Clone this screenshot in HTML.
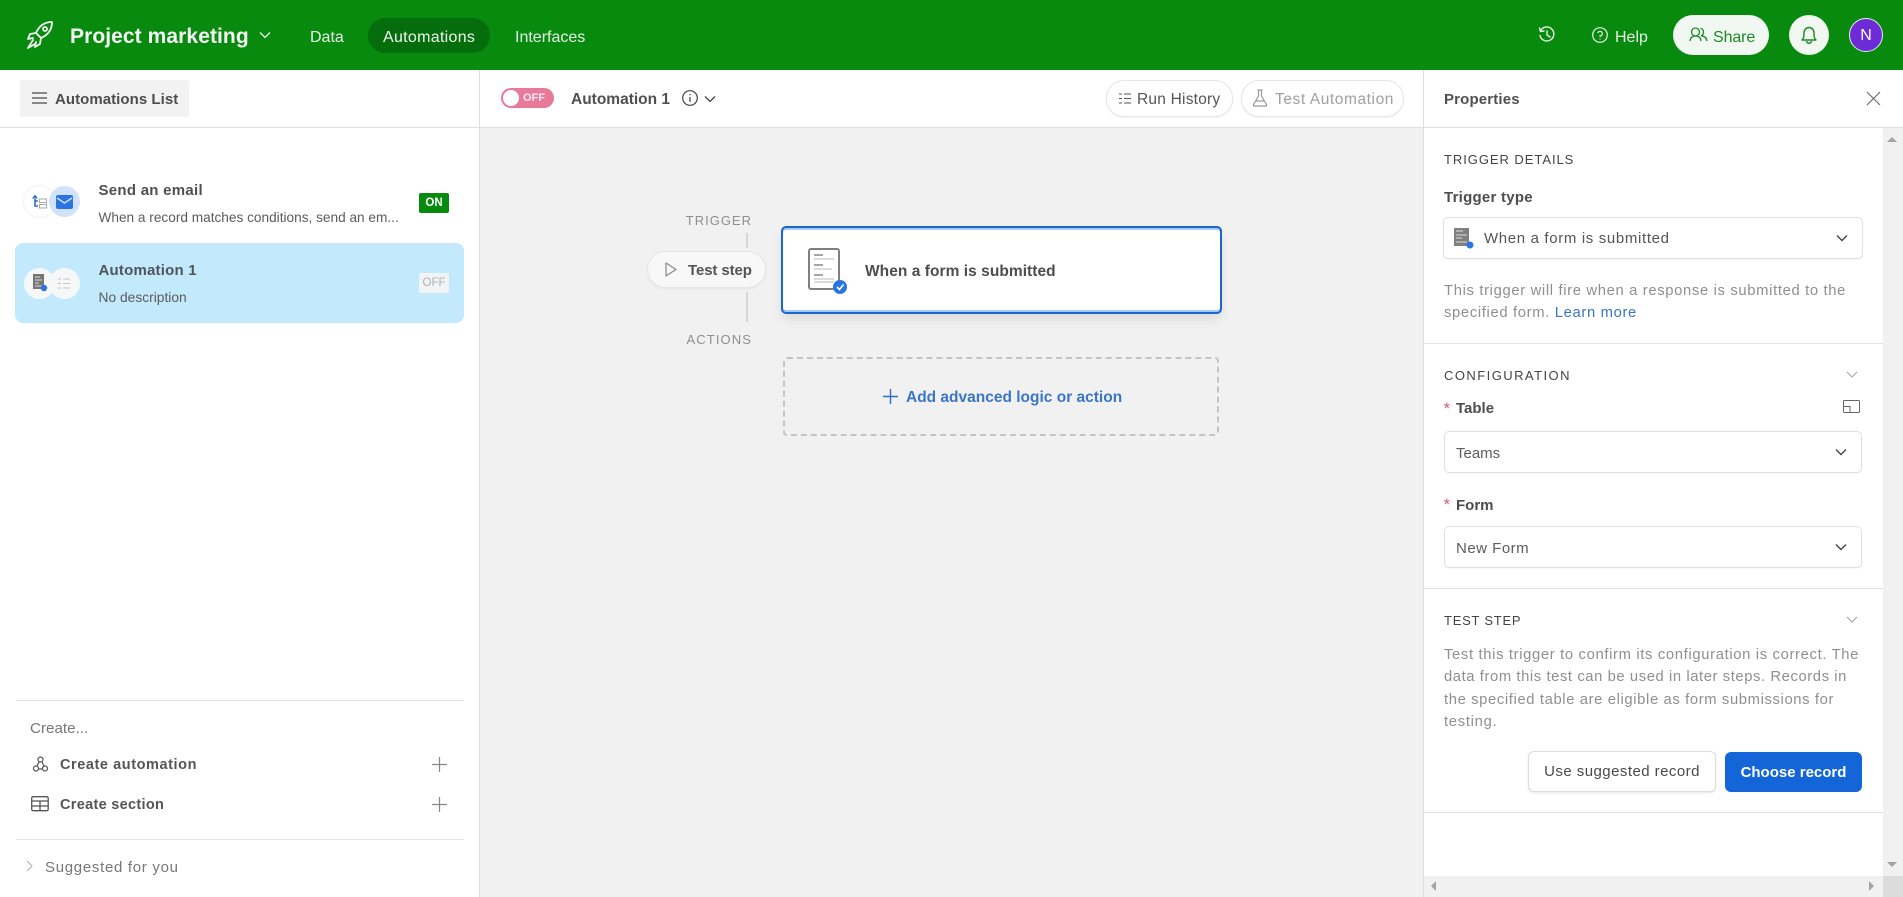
<!DOCTYPE html>
<html><head><meta charset="utf-8"><style>
html,body{margin:0;padding:0;width:1903px;height:897px;overflow:hidden;background:#fff;font-family:"Liberation Sans",sans-serif}
.a{position:absolute}
.t{position:absolute;white-space:nowrap;line-height:20px;height:20px;font-size:15px;color:#4a4a4a;margin-top:1px}
svg{position:absolute;overflow:visible}
.l{position:absolute;height:1px;background:#e4e4e4}
.sel{position:absolute;background:#fff;border:1px solid #e0e0e0;border-radius:5px;box-sizing:border-box;box-shadow:0 1px 1px rgba(0,0,0,.04)}
.g{color:#8f8f8f}.h{font-size:13px;color:#444}
.b{font-weight:bold}
</style></head><body>
<!-- canvas -->
<div class="a" style="left:480px;top:127px;width:943px;height:770px;background:#f1f1f1"></div>
<!-- header -->
<div class="a" style="left:0;top:0;width:1903px;height:70px;background:#078a0e"></div>
<svg style="left:26px;top:20px" width="28" height="30" viewBox="0 0 28 30" fill="none" stroke="#f3f8f3" stroke-width="1.800" stroke-linejoin="round" stroke-linecap="round"><path d="M26 2 C18 2 13 6 10 13 L15 18 C22 15 26 10 26 2Z"/><circle cx="19" cy="9" r="2"/><path d="M10 13 L4 14 L2 19 L7 18M15 18 L14 24 L9 27 L10 22"/><path d="M7 20 L2 28 L9 24"/></svg>
<div class="t" style="left:70px;top:26px;font-size:21px;font-weight:bold;color:#f4f9f4;letter-spacing:.08px">Project marketing</div>
<svg style="left:259px;top:31px" width="12" height="8" fill="none" stroke="#e6f2e6" stroke-width="1.300"><path d="M1 1.500 L6 6.500 L11 1.500"/></svg>
<div class="t" style="left:310px;top:27px;font-size:16px;color:#e6f2e6">Data</div>
<div class="a" style="left:368px;top:18px;width:122px;height:35px;border-radius:18px;background:#056d0b"></div>
<div class="t" style="left:383px;top:27px;font-size:16px;color:#eef7ee;letter-spacing:.3px">Automations</div>
<div class="t" style="left:515px;top:27px;font-size:16px;color:#e6f2e6">Interfaces</div>
<svg style="left:1538px;top:26px" width="18" height="18" viewBox="0 0 18 18" fill="none" stroke="#e6f2e6" stroke-width="1.400" stroke-linecap="round"><path d="M2.500 5 A7 7 0 1 1 2 9.500"/><path d="M1.500 2 L2.500 5.500 L6 5"/><path d="M9 5 V9 L12 11"/></svg>
<svg style="left:1592px;top:27px" width="16" height="16" viewBox="0 0 16 16" fill="none" stroke="#e6f2e6" stroke-width="1.200"><circle cx="8" cy="8" r="7.300"/><path d="M5.800 6 A2.300 2.300 0 1 1 8 9 V10"/><path d="M8 11.500 V12.500"/></svg>
<div class="t" style="left:1615px;top:27px;font-size:16px;color:#e6f2e6">Help</div>
<div class="a" style="left:1673px;top:15px;width:96px;height:40px;border-radius:20px;background:#f1f7f1"></div>
<svg style="left:1689px;top:27px" width="19" height="15" viewBox="0 0 19 15" fill="none" stroke="#1c8a24" stroke-width="1.300"><circle cx="6.500" cy="5" r="4"/><path d="M1 14 C1.500 10 4 9 6.500 9 C9 9 11.500 10 12 14"/><path d="M11.500 1.200 A4 4 0 0 1 12 8.800 C15 9 17.500 10.500 18 14"/></svg>
<div class="t" style="left:1713px;top:27px;font-size:16px;color:#1c8a24;letter-spacing:-.1px">Share</div>
<div class="a" style="left:1789px;top:15px;width:40px;height:40px;border-radius:50%;background:#f1f7f1"></div>
<svg style="left:1801px;top:26px" width="16" height="19" viewBox="0 0 16 19" fill="none" stroke="#1c8a24" stroke-width="1.400" stroke-linejoin="round"><path d="M1 14 C3 12 3 10 3 7 C3 4 5 1.500 8 1.500 C11 1.500 13 4 13 7 C13 10 13 12 15 14Z"/><path d="M5.500 15 C6 18 10 18 10.500 15"/></svg>
<div class="a" style="left:1849px;top:18px;width:32px;height:32px;border-radius:50%;background:#6d2bd6;border:1px solid #e8e8f5;color:#fff;font-size:16px;text-align:center;line-height:34px">N</div>
<!-- left panel -->
<div class="a" style="left:479px;top:70px;width:1px;height:827px;background:#dedede"></div>
<div class="l" style="left:0;top:127px;width:1903px;background:#dedede"></div>
<div class="a" style="left:20px;top:80px;width:169px;height:37px;background:#f2f2f2;border-radius:2px"></div>
<svg style="left:32px;top:92px" width="15" height="12" stroke="#666" stroke-width="1.400"><path d="M0 1H15M0 6H15M0 11H15"/></svg>
<div class="t" style="left:55px;top:89px;font-weight:bold;font-size:15px;color:#4d4d4d;letter-spacing:.05px">Automations List</div>
<!-- item 1 -->
<div class="a" style="left:24px;top:186px;width:31px;height:31px;border-radius:50%;background:#fff;box-shadow:0 0 2px rgba(0,0,0,.15)"></div>
<svg style="left:32px;top:194px" width="15" height="16" fill="none"><path d="M3 5 V12 H6M3 7 H6" stroke="#2f6fd8" stroke-width="1.600"/><path d="M3 .5 L6 4.500 H0Z" fill="#2f6fd8"/><rect x="7.500" y="5" width="7" height="3.500" stroke="#aaa"/><rect x="7.500" y="10.500" width="7" height="3.500" stroke="#aaa"/></svg>
<div class="a" style="left:48.500px;top:186px;width:31px;height:31px;border-radius:50%;background:#d2e2fb"></div>
<svg style="left:56px;top:195px" width="17" height="14"><rect width="17" height="14" rx="2" fill="#2b74e4"/><path d="M1 3 L8.500 8 L16 3" fill="none" stroke="#d2e2fb" stroke-width="1.500"/></svg>
<div class="t" style="left:98.500px;top:180px;font-size:15px;font-weight:bold;color:#505050;letter-spacing:.27px">Send an email</div>
<div class="t" style="left:98.500px;top:207px;font-size:13.650px;color:#5c5c5c">When a record matches conditions, send an em...</div>
<div class="a" style="left:419px;top:193px;width:30px;height:20px;background:#078a0e;border-radius:2px;color:#fff;font:bold 11.500px/20px 'Liberation Sans',sans-serif;text-align:center">ON</div>
<!-- item 2 -->
<div class="a" style="left:15px;top:243px;width:449px;height:80px;background:#c2e9fc;border-radius:8px"></div>
<div class="a" style="left:24px;top:267.500px;width:31px;height:31px;border-radius:50%;background:#f6f8f8"></div>
<div class="a" style="left:48.500px;top:267.500px;width:31px;height:31px;border-radius:50%;background:#f6f8f8"></div>
<svg style="left:33px;top:274px" width="14" height="20"><rect x="0" y="0" width="11" height="15" fill="#757575"/><path d="M2 3H7M2 6H9M2 9H6M2 12H9" stroke="#ddd" stroke-width="1"/><circle cx="11" cy="14" r="3.200" fill="#2b74e4"/></svg>
<svg style="left:58px;top:277px" width="12" height="14" stroke="#c4c4c4" fill="none"><path d="M0 2H3M0 6.500H3M0 11H3M5 2H12M5 6.500H12M5 11H12"/></svg>
<div class="t" style="left:98.500px;top:260px;font-size:15px;font-weight:bold;color:#4f555b;letter-spacing:.2px">Automation 1</div>
<div class="t" style="left:98.500px;top:287px;font-size:13.800px;color:#5c5c5c">No description</div>
<div class="a" style="left:419px;top:273px;width:30px;height:20px;background:#f0f4f6;border-radius:2px;color:#b0b0b0;font:11.500px/20px 'Liberation Sans',sans-serif;text-align:center">OFF</div>
<!-- bottom left -->
<div class="l" style="left:16px;top:700px;width:448px"></div>
<div class="t" style="left:30px;top:718px;font-size:15.200px;color:#777">Create...</div>
<svg style="left:33px;top:756px" width="15" height="16" fill="none" stroke="#555" stroke-width="1.200"><circle cx="7.500" cy="3.500" r="2.500"/><circle cx="3" cy="12.500" r="2.500"/><circle cx="12" cy="12.500" r="2.500"/><path d="M6 6 L4 10M9 6 L11 10M5.500 13H9.500"/></svg>
<div class="t" style="left:60px;top:754px;font-weight:bold;font-size:14.500px;color:#555;letter-spacing:.57px">Create automation</div>
<svg style="left:432px;top:757px" width="15" height="15" stroke="#888" stroke-width="1.200"><path d="M7.500 0V15M0 7.500H15"/></svg>
<svg style="left:31px;top:796px" width="18" height="16" fill="none" stroke="#555" stroke-width="1.300"><rect x=".7" y=".7" width="16.500" height="14" rx="1.500"/><path d="M.7 5H17M.7 10H17M9 5V15"/></svg>
<div class="t" style="left:60px;top:794px;font-weight:bold;font-size:14.500px;color:#555;letter-spacing:.3px">Create section</div>
<svg style="left:432px;top:797px" width="15" height="15" stroke="#888" stroke-width="1.200"><path d="M7.500 0V15M0 7.500H15"/></svg>
<div class="l" style="left:16px;top:839px;width:448px"></div>
<svg style="left:26px;top:860px" width="7" height="12" fill="none" stroke="#b0b0b0" stroke-width="1.100"><path d="M1 1 L6 6 L1 11"/></svg>
<div class="t" style="left:45px;top:857px;font-size:15px;color:#777;letter-spacing:.7px">Suggested for you</div>
<!-- toolbar -->
<div class="a" style="left:501px;top:88px;width:53px;height:20px;border-radius:10px;background:#e8799b"></div>
<div class="a" style="left:503px;top:90px;width:16px;height:16px;border-radius:50%;background:#fff"></div>
<div class="t" style="left:523px;top:87px;font-size:11px;font-weight:bold;color:#fff;opacity:.85">OFF</div>
<div class="t" style="left:571px;top:89px;font-size:15.500px;font-weight:bold;color:#505050;letter-spacing:0">Automation 1</div>
<svg style="left:682px;top:90px" width="16" height="16" fill="none" stroke="#444" stroke-width="1.200"><circle cx="8" cy="8" r="7.300"/><path d="M8 7V12M8 4V5.200"/></svg>
<svg style="left:704px;top:95px" width="12" height="8" fill="none" stroke="#444" stroke-width="1.300"><path d="M1 1.500 L6 6.500 L11 1.500"/></svg>
<div class="a" style="left:1106px;top:80px;width:127px;height:37px;border-radius:18px;background:#fff;border:1px solid #e6e6e6;box-sizing:border-box;box-shadow:0 1px 2px rgba(0,0,0,.05)"></div>
<svg style="left:1119px;top:92px" width="12" height="13" stroke="#555" fill="none"><path d="M0 2H3M0 6.500H3M0 11H3M5 2H12M5 6.500H12M5 11H12"/></svg>
<div class="t" style="left:1137px;top:89px;font-size:15.500px;color:#555;letter-spacing:.22px">Run History</div>
<div class="a" style="left:1241px;top:80px;width:163px;height:37px;border-radius:18px;background:#fff;border:1px solid #e6e6e6;box-sizing:border-box;box-shadow:0 1px 2px rgba(0,0,0,.05)"></div>
<svg style="left:1252px;top:89px" width="16" height="18" fill="none" stroke="#999" stroke-width="1.200" stroke-linejoin="round"><path d="M5.500 1H10.500M6.500 1V7L1.500 15.500Q1 17 2.500 17H13.500Q15 17 14.500 15.500L9.500 7V1M4 12H12"/></svg>
<div class="t" style="left:1275px;top:89px;font-size:15.500px;color:#a0a0a0;letter-spacing:.58px">Test Automation</div>
<!-- canvas content -->
<div class="t" style="left:652px;width:100px;text-align:right;top:210px;font-size:13px;letter-spacing:1px;color:#8f8f8f">TRIGGER</div>
<div class="a" style="left:746px;top:233px;width:2px;height:15px;background:#d6d6d6"></div>
<div class="a" style="left:647px;top:251px;width:119px;height:37px;border-radius:19px;background:#f8f8f8;border:1px solid #e6e6e6;box-sizing:border-box;box-shadow:0 1px 2px rgba(0,0,0,.05)"></div>
<svg style="left:665px;top:262px" width="12" height="15" fill="none" stroke="#888" stroke-width="1.200" stroke-linejoin="round"><path d="M1 1 L11 7.500 L1 14Z"/></svg>
<div class="t" style="left:688px;top:260px;font-size:15px;font-weight:bold;color:#555;letter-spacing:-.1px">Test step</div>
<div class="a" style="left:746px;top:292px;width:2px;height:30px;background:#d6d6d6"></div>
<div class="t" style="left:652px;width:100px;text-align:right;top:329px;font-size:13px;letter-spacing:1.100px;color:#8f8f8f">ACTIONS</div>
<div class="a" style="left:781px;top:226px;width:441px;height:88px;box-sizing:border-box;background:#fff;border:2px solid #1b66c9;border-radius:5px;box-shadow:inset 0 2px 0 #a9c9f4,inset 0 -2px 0 #a9c9f4,0 6px 10px rgba(0,0,0,.08)"></div>
<svg style="left:808px;top:248px" width="40" height="48" fill="none"><rect x="1" y="1" width="30" height="40" rx="2" stroke="#808080" stroke-width="2"/><path d="M6 7H15M6 17H15M6 27H15" stroke="#888" stroke-width="1.500"/><path d="M6 11H26M6 21H24M6 31H26M6 34H26" stroke="#dcdcdc" stroke-width="2"/><circle cx="32" cy="39" r="7" fill="#2b74e4"/><path d="M29 39 L31.500 41.500 L35.500 36.500" stroke="#fff" stroke-width="1.600"/></svg>
<div class="t" style="left:865px;top:261px;font-size:15.500px;font-weight:bold;color:#4d4d4d;letter-spacing:.05px">When a form is submitted</div>
<div class="a" style="left:783px;top:357px;width:436px;height:79px;box-sizing:border-box;border:2px dashed #c4c4c4;border-radius:4px"></div>
<svg style="left:883px;top:389px" width="15" height="15" stroke="#2f6fc0" stroke-width="1.400"><path d="M7.500 0V15M0 7.500H15"/></svg>
<div class="t" style="left:906px;top:387px;font-size:15.500px;font-weight:bold;color:#3a76c4;letter-spacing:0">Add advanced logic or action</div>
<!-- right panel -->
<div class="a" style="left:1423px;top:70px;width:1px;height:827px;background:#dedede"></div>
<div class="a" style="left:1424px;top:128px;width:459px;height:769px;background:#fff"></div>
<div class="a" style="left:1883px;top:128px;width:20px;height:769px;background:#f1f1f1"></div>
<div class="a" style="left:1424px;top:876px;width:459px;height:21px;background:#f1f1f1"></div>
<div class="a" style="left:1883px;top:876px;width:20px;height:21px;background:#dcdcdc"></div>
<div class="a" style="left:1887px;top:137px;border:5px solid transparent;border-bottom:5px solid #a3a3a3;border-top:0"></div>
<div class="a" style="left:1887px;top:862px;border:5px solid transparent;border-top:5px solid #a3a3a3;border-bottom:0"></div>
<div class="a" style="left:1431px;top:881px;border:5px solid transparent;border-right:5px solid #a3a3a3;border-left:0"></div>
<div class="a" style="left:1869px;top:881px;border:5px solid transparent;border-left:5px solid #a3a3a3;border-right:0"></div>
<div class="t" style="left:1444px;top:89px;font-size:15px;font-weight:bold;color:#505050;letter-spacing:.15px">Properties</div>
<svg style="left:1867px;top:92px" width="13" height="13" stroke="#666" stroke-width="1.100"><path d="M0 0L13 13M13 0L0 13"/></svg>
<div class="t h" style="left:1444px;top:149px;letter-spacing:.95px">TRIGGER DETAILS</div>
<div class="t b" style="left:1444px;top:187px;font-size:15px;color:#4d4d4d;letter-spacing:.25px">Trigger type</div>
<div class="sel" style="left:1443px;top:217px;width:420px;height:42px"></div>
<svg style="left:1454px;top:228px" width="21" height="21"><rect width="15" height="18" fill="#808080"/><path d="M2 3H9M2 7H13M2 10H8M2 14H13" stroke="#ddd"/><circle cx="16" cy="17" r="3.500" fill="#2b74e4"/></svg>
<div class="t" style="left:1484px;top:228px;font-size:15px;color:#555;letter-spacing:.65px">When a form is submitted</div>
<svg style="left:1836px;top:234px" width="12" height="8" fill="none" stroke="#444" stroke-width="1.400"><path d="M1 1.500 L6 6.500 L11 1.500"/></svg>
<div class="t g" style="left:1444px;top:280px;font-size:14.800px;letter-spacing:.65px">This trigger will fire when a response is submitted to the</div>
<div class="t g" style="left:1444px;top:302px;font-size:14.800px;letter-spacing:.65px">specified form. <span style="color:#3a76c4">Learn more</span></div>
<div class="l" style="left:1424px;top:343px;width:459px"></div>
<div class="t h" style="left:1444px;top:365px;letter-spacing:1.450px">CONFIGURATION</div>
<svg style="left:1846px;top:371px" width="12" height="8" fill="none" stroke="#aaa" stroke-width="1.200"><path d="M1 1 L6 6 L11 1"/></svg>
<div class="t" style="left:1443.500px;top:398px;font-size:17px;color:#d0607f">*</div>
<div class="t b" style="left:1456px;top:398px;font-size:15px;color:#4d4d4d">Table</div>
<svg style="left:1843px;top:400px" width="17" height="13" fill="none" stroke="#666"><rect x=".5" y=".5" width="16" height="12" rx="1"/><path d="M.5 6.500H7V12.500"/></svg>
<div class="sel" style="left:1444px;top:431px;width:418px;height:42px"></div>
<div class="t" style="left:1456px;top:443px;font-size:15px;color:#5c5c5c">Teams</div>
<svg style="left:1835px;top:448px" width="12" height="8" fill="none" stroke="#444" stroke-width="1.400"><path d="M1 1.500 L6 6.500 L11 1.500"/></svg>
<div class="t" style="left:1443.500px;top:494px;font-size:17px;color:#d0607f">*</div>
<div class="t b" style="left:1456px;top:495px;font-size:15px;color:#4d4d4d">Form</div>
<div class="sel" style="left:1444px;top:526px;width:418px;height:42px"></div>
<div class="t" style="left:1456px;top:538px;font-size:15px;color:#5c5c5c;letter-spacing:.5px">New Form</div>
<svg style="left:1835px;top:543px" width="12" height="8" fill="none" stroke="#444" stroke-width="1.400"><path d="M1 1.500 L6 6.500 L11 1.500"/></svg>
<div class="l" style="left:1424px;top:588px;width:459px"></div>
<div class="t h" style="left:1444px;top:610px;letter-spacing:.75px">TEST STEP</div>
<svg style="left:1846px;top:616px" width="12" height="8" fill="none" stroke="#aaa" stroke-width="1.200"><path d="M1 1 L6 6 L11 1"/></svg>
<div class="t g" style="left:1444px;top:644px;font-size:14.800px;letter-spacing:.65px">Test this trigger to confirm its configuration is correct. The</div>
<div class="t g" style="left:1444px;top:666px;font-size:14.800px;letter-spacing:.58px">data from this test can be used in later steps. Records in</div>
<div class="t g" style="left:1444px;top:689px;font-size:14.800px;letter-spacing:.62px">the specified table are eligible as form submissions for</div>
<div class="t g" style="left:1444px;top:711px;font-size:14.800px;letter-spacing:.7px">testing.</div>
<div class="a" style="left:1528px;top:751px;width:188px;height:41px;box-sizing:border-box;background:#fff;border:1px solid #ddd;border-radius:6px;box-shadow:0 1px 2px rgba(0,0,0,.1);color:#4a4a4a;font-size:15px;line-height:40px;text-align:center;letter-spacing:.45px">Use suggested record</div>
<div class="a" style="left:1725px;top:752px;width:137px;height:40px;background:#1466d8;border-radius:6px;color:#fff;font-size:15px;font-weight:bold;line-height:41px;text-align:center">Choose record</div>
<div class="l" style="left:1424px;top:812px;width:459px"></div>
</body></html>
